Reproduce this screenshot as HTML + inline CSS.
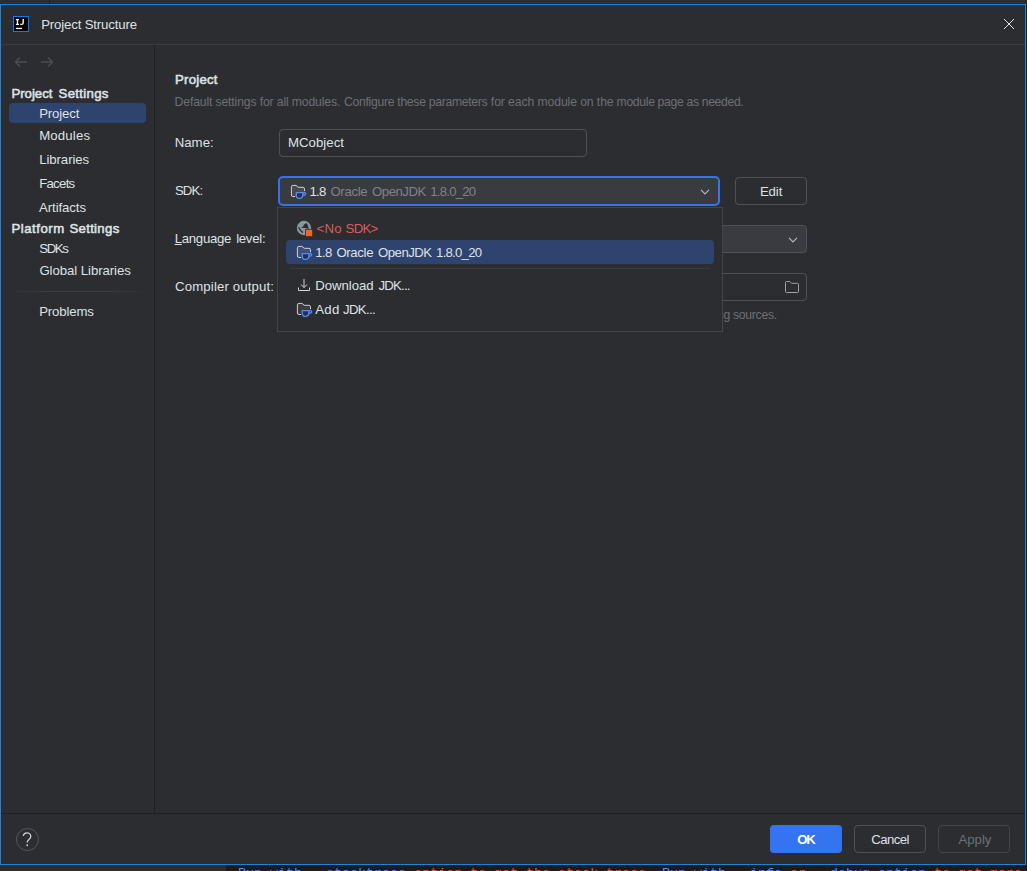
<!DOCTYPE html>
<html>
<head>
<meta charset="utf-8">
<title>Project Structure</title>
<style>
html,body{margin:0;padding:0;}
body{width:1027px;height:871px;overflow:hidden;background:#1B1C1F;position:relative;font-family:"Liberation Sans",sans-serif;}
.abs,.t,svg{position:absolute;}
.t{white-space:nowrap;line-height:normal;}
.t u{text-decoration:underline;text-underline-offset:1px;text-decoration-thickness:1px;}
.mono{font-family:"Liberation Mono",monospace;font-size:13.333px;white-space:pre;line-height:normal;}
</style>
</head>
<body>
<!-- IDE behind the dialog: top strip -->
<div class="abs" style="left:0;top:0;width:1027px;height:4px;background:#2B2D30"></div>
<div class="abs" style="left:49px;top:0;width:1px;height:4px;background:#1E1F22"></div>
<!-- IDE behind the dialog: bottom strip -->
<div class="abs" style="left:0;top:865px;width:226px;height:6px;background:#2B2D30"></div>
<div class="abs mono" style="left:238px;top:866.4px;"><span style="color:#548AF7">Run with --stacktrace</span><span style="color:#F0524F"> option to get the stack trace. </span><span style="color:#548AF7">Run with --info</span><span style="color:#F0524F"> or </span><span style="color:#548AF7">--debug option</span><span style="color:#F0524F"> to get more log output.</span></div>

<!-- dialog window -->
<div class="abs" style="left:0;top:4px;width:1024px;height:859px;background:#2B2D30;border:1px solid #1C84DA"></div>
<!-- title bar separator -->
<div class="abs" style="left:1px;top:44px;width:1024px;height:1px;background:#393B40"></div>
<!-- sidebar divider -->
<div class="abs" style="left:154px;top:45px;width:1px;height:768px;background:#1E1F22"></div>
<!-- footer separator -->
<div class="abs" style="left:1px;top:813px;width:1024px;height:1px;background:#1E1F22"></div>

<!-- app icon -->
<div class="abs" style="left:13px;top:16px;width:14px;height:14px;background:#000;border:1px solid #087CFA"></div>
<svg style="left:13px;top:16px" width="16" height="16" viewBox="0 0 16 16">
  <path d="M2.9 3.6h3.1M4.45 3.6v4.8M2.9 8.4h3.1" stroke="#fff" stroke-width="1.3" fill="none"/>
  <path d="M10.2 3v3.8q0 1.6-1.6 1.6H7.3" stroke="#fff" stroke-width="1.4" fill="none"/>
  <rect x="2.9" y="11.8" width="6.2" height="1.3" fill="#fff"/>
</svg>
<!-- close X -->
<svg style="left:1003px;top:18px" width="12" height="12" viewBox="0 0 12 12"><path d="M1 1l10 10M11 1L1 11" stroke="#DFE1E5" stroke-width="1" fill="none"/></svg>

<!-- nav arrows -->
<svg style="left:12px;top:54px" width="44" height="16" viewBox="0 0 44 16">
  <path d="M15 8H3.6M8 3.4L3.4 8L8 12.6" stroke="#4B4D52" stroke-width="1.35" fill="none"/>
  <path d="M29 8h11.4M36 3.4L40.6 8L36 12.6" stroke="#4B4D52" stroke-width="1.35" fill="none"/>
</svg>

<!-- sidebar selection -->
<div class="abs" style="left:9px;top:103px;width:137px;height:20px;border-radius:4px;background:#2E436E"></div>
<!-- sidebar separator -->
<div class="abs" style="left:8px;top:291px;width:139px;height:1px;background:linear-gradient(to right,rgba(60,62,67,0),#3C3E43 30%,#3C3E43 70%,rgba(60,62,67,0))"></div>

<!-- Name field -->
<div class="abs" style="left:279px;top:129px;width:306px;height:26px;border:1px solid #4E5157;border-radius:4px"></div>
<!-- SDK combobox (focused) -->
<div class="abs" style="left:278px;top:176px;width:438px;height:26px;border:2px solid #3574F0;border-radius:5px;background:#393B40"></div>
<svg style="left:699px;top:187px" width="12" height="10" viewBox="0 0 12 10"><path d="M2 2.8L6 6.8L10 2.8" stroke="#B4B8BF" stroke-width="1.2" fill="none"/></svg>
<!-- Edit button -->
<div class="abs" style="left:735px;top:177px;width:70px;height:26px;border:1px solid #4E5157;border-radius:4px"></div>
<!-- Language level combobox -->
<div class="abs" style="left:500px;top:225px;width:305px;height:26px;border:1px solid #4E5157;border-radius:4px;background:#393B40"></div>
<svg style="left:787px;top:235px" width="12" height="10" viewBox="0 0 12 10"><path d="M2 2.8L6 6.8L10 2.8" stroke="#B4B8BF" stroke-width="1.2" fill="none"/></svg>
<!-- Compiler output field -->
<div class="abs" style="left:500px;top:273px;width:305px;height:26px;border:1px solid #4E5157;border-radius:4px"></div>
<svg style="left:784px;top:279px" width="16" height="16" viewBox="0 0 16 16"><path d="M1.5 3.5a1 1 0 0 1 1-1h3.3l1.7 1.8h6a1 1 0 0 1 1 1v7.2a1 1 0 0 1-1 1h-11a1 1 0 0 1-1-1z" stroke="#9DA0A8" stroke-width="1" fill="none"/></svg>

<!-- SDK icon in combobox -->
<svg style="left:290px;top:184px" width="17" height="16" viewBox="0 0 17 16">
  <path d="M1.4 2.9a1.5 1.5 0 0 1 1.5-1.5h3.1l2.2 1.9h4.8a1.5 1.5 0 0 1 1.5 1.5v7.7h-13.1z" fill="#FFFFFF" fill-opacity="0.08"/>
  <path d="M5.1 12.5H2.9a1.5 1.5 0 0 1-1.5-1.5V2.9a1.5 1.5 0 0 1 1.5-1.5h3.1l2.2 1.9h4.8a1.5 1.5 0 0 1 1.5 1.5V7.1" stroke="#CED0D6" stroke-width="1" fill="none"/>
  <path d="M6.35 8.55h6.5v2.6a3.25 3.25 0 0 1-6.5 0z" fill="#25324D" stroke="#548AF7" stroke-width="1.3"/>
  <path d="M12.85 8.55h1.55a1.25 1.25 0 0 1 0 2.5h-1.7" stroke="#548AF7" stroke-width="1.3" fill="none"/>
</svg>

<!-- footer buttons -->
<div class="abs" style="left:770px;top:825px;width:72px;height:28px;border-radius:4px;background:#3574F0"></div>
<div class="abs" style="left:854px;top:825px;width:70px;height:26px;border:1px solid #4E5157;border-radius:4px"></div>
<div class="abs" style="left:938px;top:825px;width:70px;height:26px;border:1px solid #43454A;border-radius:4px"></div>

<span class="t" style="left:41.14px;top:17.10px;font-size:13.2px;font-weight:400;color:#DFE1E5;letter-spacing:-0.145px">Project Structure</span>
<span class="t" style="left:11.46px;top:85.80px;font-size:13.2px;font-weight:400;-webkit-text-stroke:0.55px;color:#DFE1E5;letter-spacing:-0.013px">Project</span>
<span class="t" style="left:58.57px;top:85.80px;font-size:13.2px;font-weight:400;-webkit-text-stroke:0.55px;color:#DFE1E5;letter-spacing:0.319px">Settings</span>
<span class="t" style="left:39.14px;top:105.80px;font-size:13.2px;font-weight:400;color:#DFE1E5;letter-spacing:-0.144px">Project</span>
<span class="t" style="left:39.14px;top:128.00px;font-size:13.2px;font-weight:400;color:#DFE1E5;letter-spacing:0.170px">Modules</span>
<span class="t" style="left:39.14px;top:151.60px;font-size:13.2px;font-weight:400;color:#DFE1E5;letter-spacing:-0.063px">Libraries</span>
<span class="t" style="left:39.14px;top:175.70px;font-size:13.2px;font-weight:400;color:#DFE1E5;letter-spacing:-0.700px">Facets</span>
<span class="t" style="left:39.08px;top:199.80px;font-size:13.2px;font-weight:400;color:#DFE1E5;letter-spacing:-0.090px">Artifacts</span>
<span class="t" style="left:11.46px;top:221.20px;font-size:13.2px;font-weight:400;-webkit-text-stroke:0.55px;color:#DFE1E5;letter-spacing:0.531px">Platform</span>
<span class="t" style="left:69.40px;top:221.20px;font-size:13.2px;font-weight:400;-webkit-text-stroke:0.55px;color:#DFE1E5;letter-spacing:0.314px">Settings</span>
<span class="t" style="left:39.22px;top:241.00px;font-size:13.2px;font-weight:400;color:#DFE1E5;letter-spacing:-1.348px">SDKs</span>
<span class="t" style="left:39.41px;top:263.20px;font-size:13.2px;font-weight:400;color:#DFE1E5;letter-spacing:-0.061px">Global Libraries</span>
<span class="t" style="left:39.14px;top:303.70px;font-size:13.2px;font-weight:400;color:#DFE1E5;letter-spacing:-0.138px">Problems</span>
<span class="t" style="left:175.12px;top:72.20px;font-size:13.2px;font-weight:400;-webkit-text-stroke:0.55px;color:#DFE1E5;letter-spacing:0.216px">Project</span>
<span class="t" style="left:174.61px;top:95.20px;font-size:12.2px;font-weight:400;color:#6C7077;letter-spacing:-0.136px">Default settings for all modules.</span>
<span class="t" style="left:344.07px;top:95.20px;font-size:12.2px;font-weight:400;color:#6C7077;letter-spacing:-0.299px">Configure these parameters</span>
<span class="t" style="left:490.85px;top:95.20px;font-size:12.2px;font-weight:400;color:#6C7077;letter-spacing:-0.091px">for each module on the</span>
<span class="t" style="left:616.61px;top:95.20px;font-size:12.2px;font-weight:400;color:#6C7077;letter-spacing:-0.335px">module page as needed.</span>
<span class="t" style="left:174.67px;top:135.00px;font-size:13.2px;font-weight:400;color:#DFE1E5;letter-spacing:0.042px">Name:</span>
<span class="t" style="left:174.89px;top:182.90px;font-size:13.2px;font-weight:400;color:#DFE1E5;letter-spacing:-0.831px">SDK:</span>
<span class="t" style="left:174.67px;top:230.90px;font-size:13.2px;font-weight:400;color:#DFE1E5;letter-spacing:-0.275px"><u>L</u>anguage</span>
<span class="t" style="left:236.18px;top:230.90px;font-size:13.2px;font-weight:400;color:#DFE1E5;letter-spacing:-0.283px">level:</span>
<span class="t" style="left:175.08px;top:278.70px;font-size:13.2px;font-weight:400;color:#DFE1E5;letter-spacing:0.140px">Compiler output:</span>
<span class="t" style="left:287.94px;top:135.00px;font-size:13.2px;font-weight:400;color:#DFE1E5;letter-spacing:0.049px">MCobject</span>
<span class="t" style="left:309.53px;top:183.60px;font-size:13.2px;font-weight:400;color:#DFE1E5;letter-spacing:-0.790px">1.8</span>
<span class="t" style="left:330.45px;top:183.60px;font-size:13.2px;font-weight:400;color:#7E828A;letter-spacing:-0.324px">Oracle</span>
<span class="t" style="left:372.12px;top:183.60px;font-size:13.2px;font-weight:400;color:#7E828A;letter-spacing:-0.508px">OpenJDK</span>
<span class="t" style="left:430.22px;top:183.60px;font-size:13.2px;font-weight:400;color:#7E828A;letter-spacing:-0.768px">1.8.0_20</span>
<span class="t" style="left:759.94px;top:183.60px;font-size:13.2px;font-weight:400;color:#DFE1E5;letter-spacing:-0.119px">Edit</span>
<span class="t" style="left:716.91px;top:307.70px;font-size:12.2px;font-weight:400;color:#6C7077;letter-spacing:-0.283px">ng sources.</span>
<span class="t" style="left:797.18px;top:832.00px;font-size:13.2px;font-weight:700;color:#FFFFFF;letter-spacing:-1.186px">OK</span>
<span class="t" style="left:871.22px;top:832.00px;font-size:13.2px;font-weight:400;color:#DFE1E5;letter-spacing:-0.559px">Cancel</span>
<span class="t" style="left:958.50px;top:832.00px;font-size:13.2px;font-weight:400;color:#6C7077;letter-spacing:-0.020px">Apply</span>

<!-- help button -->
<div class="abs" style="left:16px;top:828px;width:21px;height:21px;border:1px solid #55585E;border-radius:50%"></div>
<svg style="left:16px;top:828px" width="23" height="23" viewBox="0 0 23 23">
  <path d="M7.200 7.900a3.850 3.850 0 0 1 7.600.600c0 2.600-3.600 3-3.600 6.100" stroke="#CED0D6" stroke-width="1.300" fill="none"/>
  <rect x="10.400" y="16.400" width="1.600" height="1.700" fill="#CED0D6"/>
</svg>



<!-- popup -->
<div class="abs" style="left:277px;top:207px;width:444px;height:123px;background:#2B2D30;border:1px solid #43454A"></div>
<div class="abs" style="left:286px;top:240px;width:428px;height:24px;border-radius:4px;background:#2E436E"></div>
<div class="abs" style="left:290px;top:268px;width:420px;height:1px;background:#393B40"></div>
<!-- globe (No SDK) -->
<svg style="left:296px;top:220px" width="18" height="18" viewBox="0 0 18 18">
  <circle cx="8" cy="8" r="7.2" fill="#8C969E"/>
  <path d="M5.2 7.3L7 6.7L7.8 4.8L10.3 3L11.4 4.300L12.500 7.600V9L9.800 7.900L5.400 7.700z" fill="#2B2D30"/>
  <path d="M2.500 7.300Q4 10.500 6.900 12.600" stroke="#2B2D30" stroke-width="1.300" fill="none"/>
  <rect x="9" y="8.900" width="8" height="8" fill="#2B2D30"/>
  <rect x="9.800" y="9.700" width="6.400" height="6.500" fill="#F26522"/>
</svg>
<!-- sdk icon row 2 -->
<svg style="left:296px;top:245px" width="17" height="16" viewBox="0 0 17 16">
  <path d="M1.4 2.9a1.5 1.5 0 0 1 1.5-1.5h3.1l2.2 1.9h4.8a1.5 1.5 0 0 1 1.5 1.5v7.7h-13.1z" fill="#FFFFFF" fill-opacity="0.08"/>
  <path d="M5.1 12.5H2.9a1.5 1.5 0 0 1-1.5-1.5V2.9a1.5 1.5 0 0 1 1.5-1.5h3.1l2.2 1.9h4.8a1.5 1.5 0 0 1 1.5 1.5V7.1" stroke="#CED0D6" stroke-width="1" fill="none"/>
  <path d="M6.35 8.55h6.5v2.6a3.25 3.25 0 0 1-6.5 0z" fill="#25324D" stroke="#548AF7" stroke-width="1.3"/>
  <path d="M12.85 8.55h1.55a1.25 1.25 0 0 1 0 2.5h-1.7" stroke="#548AF7" stroke-width="1.3" fill="none"/>
</svg>
<!-- download icon -->
<svg style="left:296px;top:277px" width="16" height="16" viewBox="0 0 16 16">
  <path d="M8 2v8.500M5 7.500L8 10.500L11 7.500" stroke="#CED0D6" stroke-width="1" fill="none"/>
  <path d="M2.500 10.500v3h11v-3" stroke="#CED0D6" stroke-width="1" fill="none"/>
</svg>
<!-- add jdk icon -->
<svg style="left:296px;top:302px" width="17" height="16" viewBox="0 0 17 16">
  <path d="M1.4 2.9a1.5 1.5 0 0 1 1.5-1.5h3.1l2.2 1.9h4.8a1.5 1.5 0 0 1 1.5 1.5v7.7h-13.1z" fill="#FFFFFF" fill-opacity="0.08"/>
  <path d="M5.1 12.5H2.9a1.5 1.5 0 0 1-1.5-1.5V2.9a1.5 1.5 0 0 1 1.5-1.5h3.1l2.2 1.9h4.8a1.5 1.5 0 0 1 1.5 1.5V7.1" stroke="#CED0D6" stroke-width="1" fill="none"/>
  <path d="M6.35 8.55h6.5v2.6a3.25 3.25 0 0 1-6.5 0z" fill="#25324D" stroke="#548AF7" stroke-width="1.3"/>
  <path d="M12.85 8.55h1.55a1.25 1.25 0 0 1 0 2.5h-1.7" stroke="#548AF7" stroke-width="1.3" fill="none"/>
</svg>
<span class="t" style="left:316.49px;top:220.80px;font-size:13.2px;font-weight:400;color:#DB5C5C;letter-spacing:0.286px">&lt;No</span>
<span class="t" style="left:345.61px;top:220.80px;font-size:13.2px;font-weight:400;color:#DB5C5C;letter-spacing:-0.725px">SDK&gt;</span>
<span class="t" style="left:315.37px;top:245.00px;font-size:13.2px;font-weight:400;color:#DFE1E5;letter-spacing:-0.702px">1.8</span>
<span class="t" style="left:336.39px;top:245.00px;font-size:13.2px;font-weight:400;color:#DFE1E5;letter-spacing:-0.349px">Oracle</span>
<span class="t" style="left:377.99px;top:245.00px;font-size:13.2px;font-weight:400;color:#DFE1E5;letter-spacing:-0.508px">OpenJDK</span>
<span class="t" style="left:436.10px;top:245.00px;font-size:13.2px;font-weight:400;color:#DFE1E5;letter-spacing:-0.770px">1.8.0_20</span>
<span class="t" style="left:315.13px;top:278.00px;font-size:13.2px;font-weight:400;color:#DFE1E5;letter-spacing:-0.013px">Download</span>
<span class="t" style="left:378.43px;top:278.00px;font-size:13.2px;font-weight:400;color:#DFE1E5;letter-spacing:-0.758px">JDK...</span>
<span class="t" style="left:315.21px;top:302.30px;font-size:13.2px;font-weight:400;color:#DFE1E5;letter-spacing:0.285px">Add</span>
<span class="t" style="left:343.00px;top:302.30px;font-size:13.2px;font-weight:400;color:#DFE1E5;letter-spacing:-0.659px">JDK...</span>
</body>
</html>
